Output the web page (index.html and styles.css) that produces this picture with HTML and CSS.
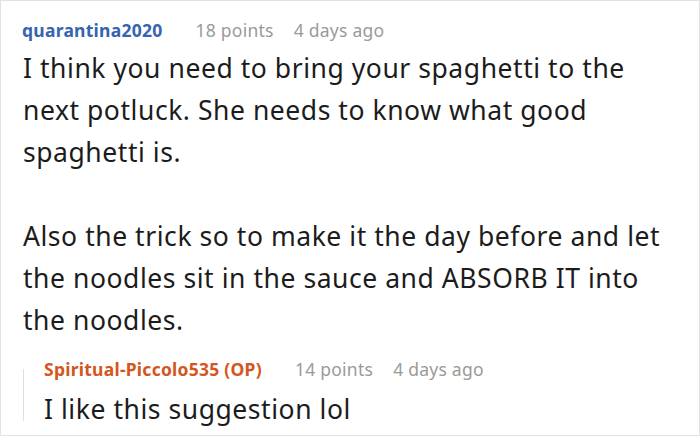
FILE: index.html
```html
<!DOCTYPE html>
<html>
<head>
<meta charset="utf-8">
<link rel="stylesheet" href="styles.css">
</head>
<body>
<div class="card">
  <div class="comment">
    <div class="meta">
      <span class="user user-blue">quarantina2020</span>
      <span class="info">18 points</span>
      <span class="info">4 days ago</span>
    </div>
    <div class="text">
      <p>I think you need to bring your spaghetti to the next potluck. She needs to know what good spaghetti is.</p>
      <p>Also the trick so to make it the day before and let the noodles sit in the sauce and ABSORB IT into the noodles.</p>
    </div>
  </div>
  <div class="reply">
    <div class="thread-line"></div>
    <div class="reply-body">
      <div class="meta">
        <span class="user user-orange">Spiritual-Piccolo535 (OP)</span>
        <span class="info">14 points</span>
        <span class="info">4 days ago</span>
      </div>
      <div class="text reply-text">
        <p>I like this suggestion lol</p>
      </div>
    </div>
  </div>
</div>
</body>
</html>
```

FILE: styles.css
```css
html, body {
  margin: 0;
  padding: 0;
  background: #ffffff;
}
.card {
  box-sizing: border-box;
  width: 700px;
  height: 436px;
  border: 1px solid #e2e2e2;
  padding: 17px 20px 0 21px;
  font-family: "Noto Sans", "Open Sans", sans-serif;
  color: #1c1c1c;
  overflow: hidden;
}
.meta {
  display: flex;
  gap: 20px;
  font-size: 17.5px;
  letter-spacing: 0.25px;
  line-height: 24px;
  white-space: nowrap;
}
.user {
  font-weight: 700;
  margin-right: 13px;
}
.user-blue { color: #3564b1; }
.user-orange { color: #d4561e; }
.info { color: #9a9a9a; }
.text {
  margin-top: 5px;
  font-size: 26.5px;
  letter-spacing: 0.55px;
  line-height: 42px;
  padding-left: 1px;
}
.text p {
  margin: 0;
}
.text p + p {
  margin-top: 42px;
}
.reply {
  display: flex;
  margin-top: 16px;
}
.thread-line {
  width: 1px;
  background: #dedede;
  margin: 12px 20px 9px 1px;
}
.reply-text {
  margin-top: 7px;
  padding-left: 0;
}
```
